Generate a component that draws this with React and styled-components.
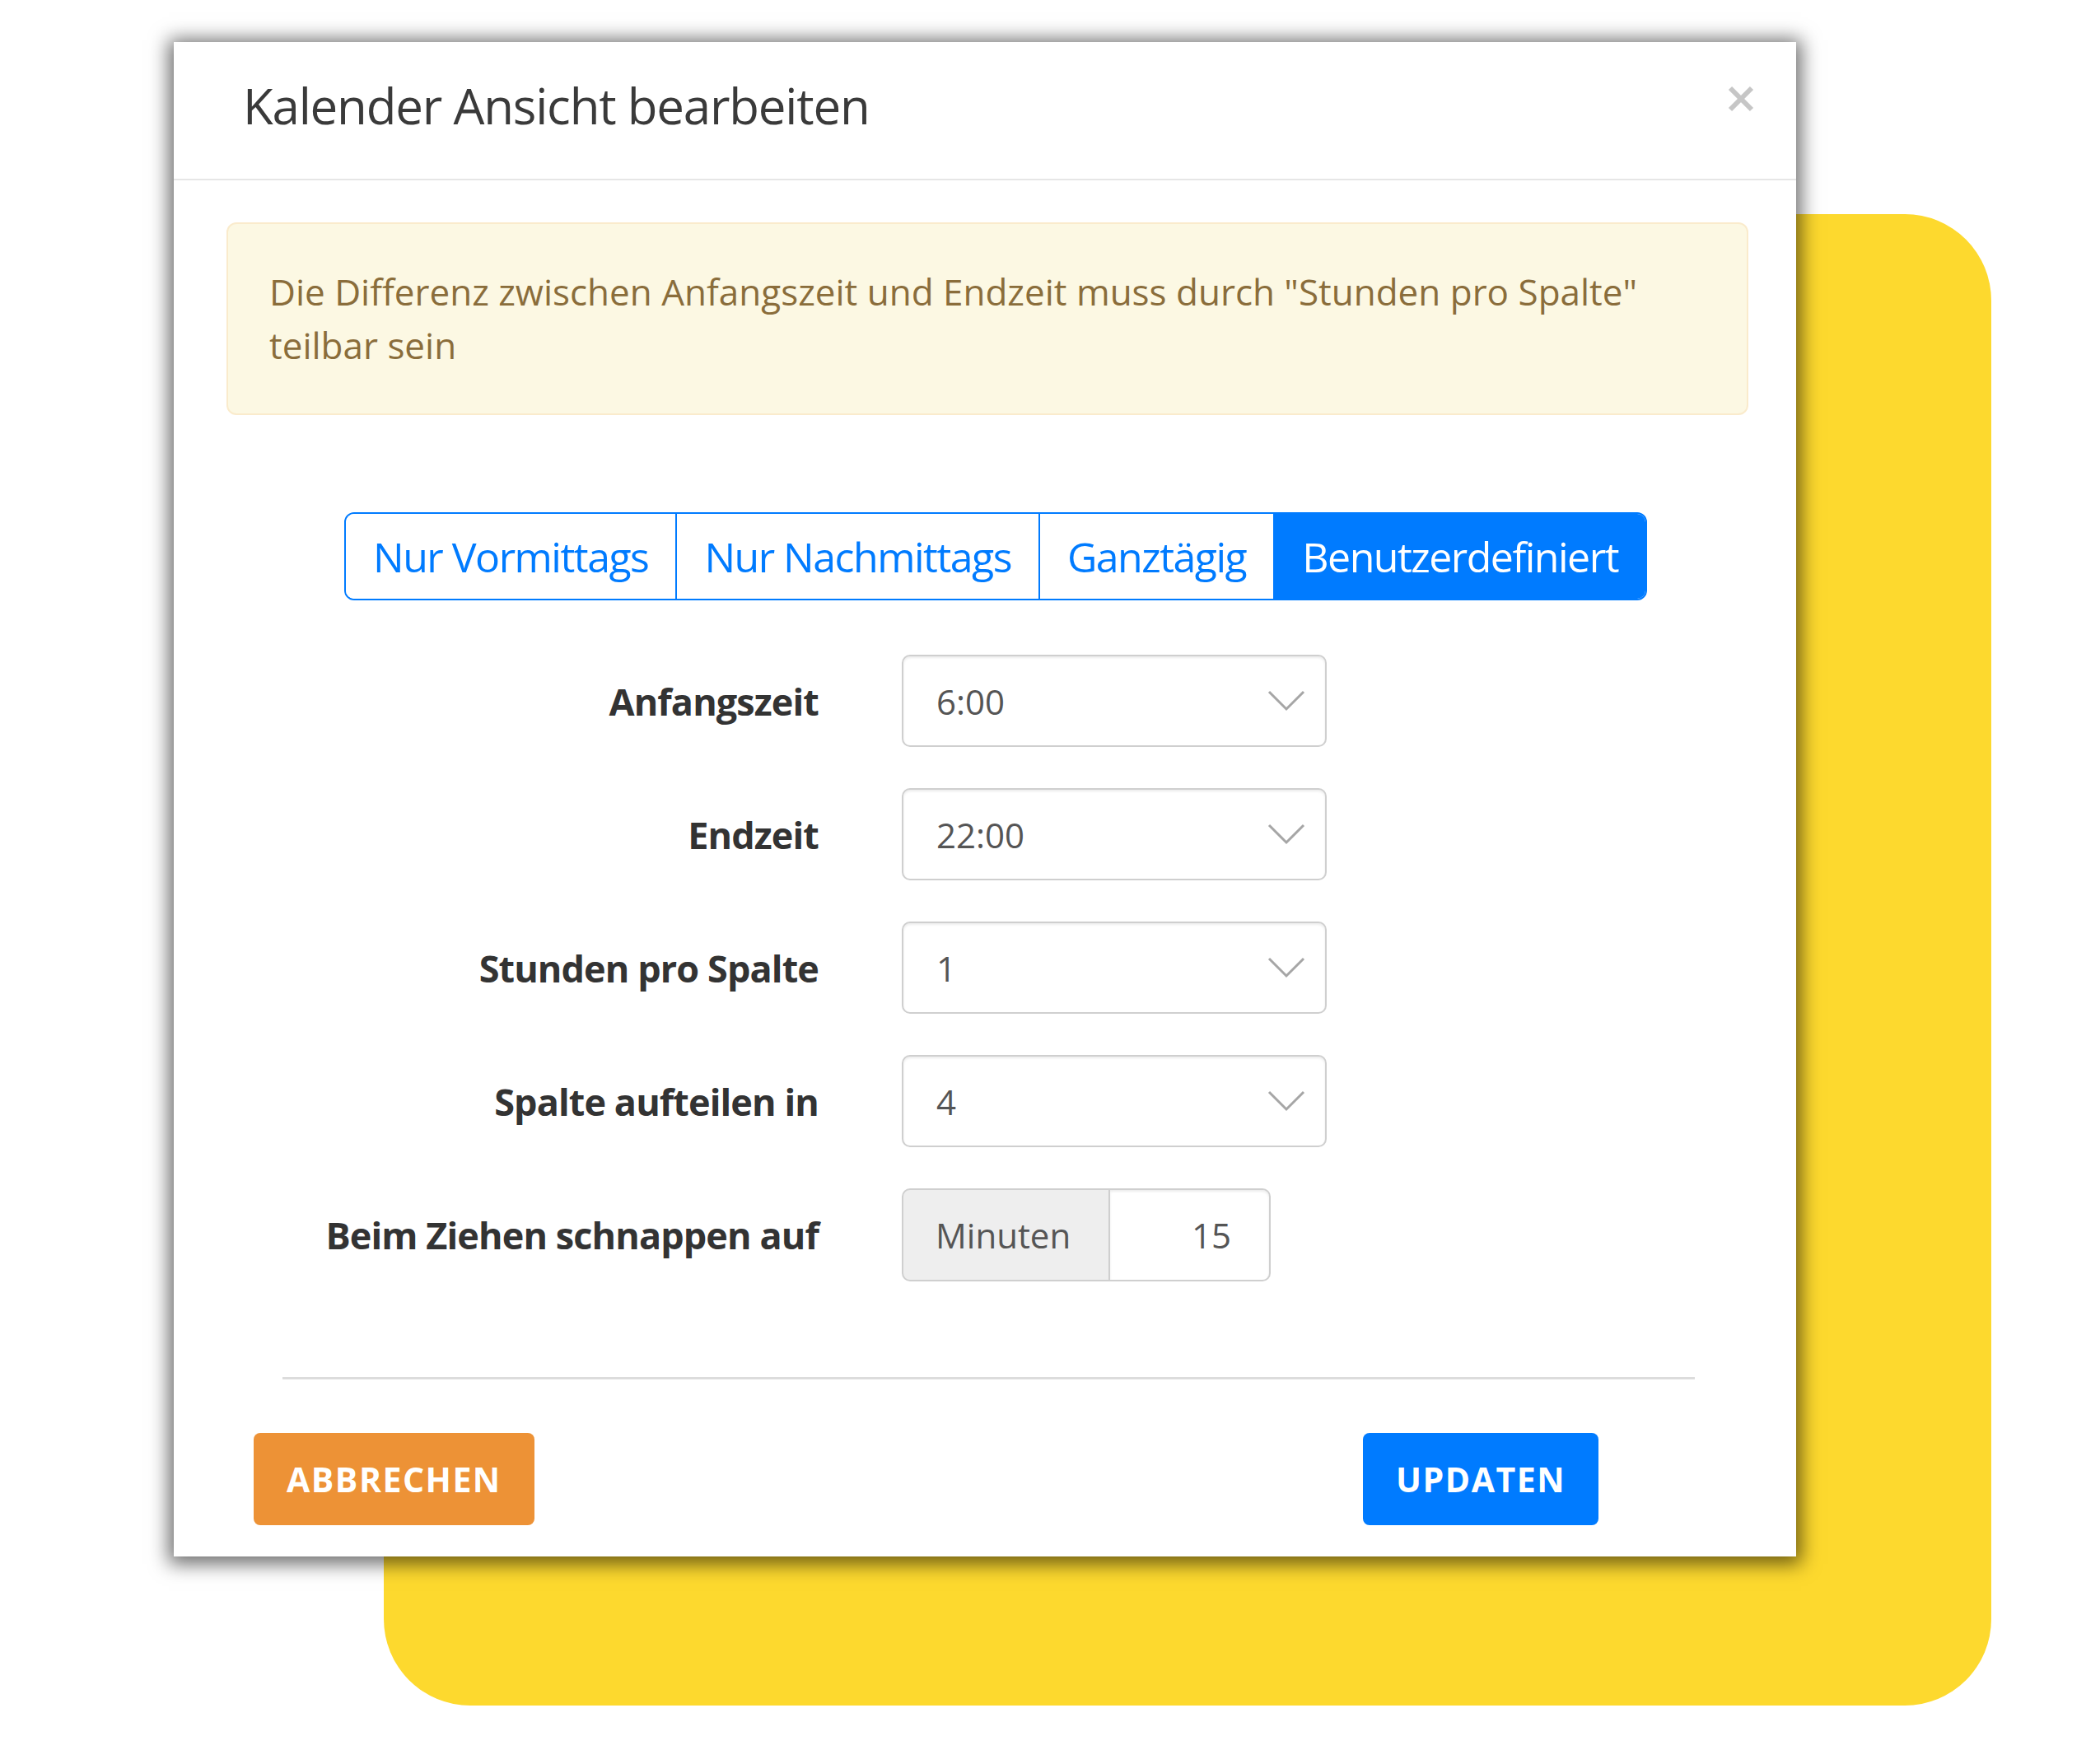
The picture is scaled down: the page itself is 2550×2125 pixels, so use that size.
import React from "react";
import styled, { createGlobalStyle } from "styled-components";

const GlobalStyle = createGlobalStyle`
  html, body {
    margin: 0;
    padding: 0;
    background: #fff;
  }
  body {
    font-family: "Open Sans", "Noto Sans", sans-serif;
    color: #333;
  }
  * {
    box-sizing: border-box;
  }
`;

const segments = ["Nur Vormittags", "Nur Nachmittags", "Ganztägig", "Benutzerdefiniert"];

const rows = [
  { label: "Anfangszeit", value: "6:00" },
  { label: "Endzeit", value: "22:00" },
  { label: "Stunden pro Spalte", value: "1" },
  { label: "Spalte aufteilen in", value: "4" },
];

function Chevron() {
  return (
    <svg width="46" height="26" viewBox="0 0 46 26" fill="none">
      <polyline points="2,2 23,23 44,2" stroke="#a6a6a6" strokeWidth="3" />
    </svg>
  );
}

function CloseIcon() {
  return (
    <svg width="32" height="32" viewBox="0 0 32 32">
      <line x1="3" y1="3" x2="29" y2="29" stroke="#c6c6c6" strokeWidth="6" />
      <line x1="29" y1="3" x2="3" y2="29" stroke="#c6c6c6" strokeWidth="6" />
    </svg>
  );
}

export default function App() {
  return (
    <>
      <GlobalStyle />
      <Stage>
        {/* yellow decoration behind the dialog */}
        <Backdrop />
        <Modal>
          <Header>
            <Title>Kalender Ansicht bearbeiten</Title>
            <CloseButton aria-label="Schließen">
              <CloseIcon />
            </CloseButton>
          </Header>
          <Body>
            <Alert>
              Die Differenz zwischen Anfangszeit und Endzeit muss durch "Stunden pro Spalte"
              teilbar sein
            </Alert>
            <SegmentRow>
              <SegGroup>
                {segments.map((s) => (
                  <Segment key={s} $active={s === "Benutzerdefiniert"}>
                    {s}
                  </Segment>
                ))}
              </SegGroup>
            </SegmentRow>
            <Form>
              {rows.map((r) => (
                <React.Fragment key={r.label}>
                  <Label>{r.label}</Label>
                  <Select>
                    <span>{r.value}</span>
                    <Chevron />
                  </Select>
                </React.Fragment>
              ))}
              <Label>Beim Ziehen schnappen auf</Label>
              <InputGroup>
                <Addon>Minuten</Addon>
                <NumberField>15</NumberField>
              </InputGroup>
            </Form>
            <Divider />
          </Body>
          <Footer>
            <Button $color="#ed9236">Abbrechen</Button>
            <Button $color="#007bff">Updaten</Button>
          </Footer>
        </Modal>
      </Stage>
    </>
  );
}

const Stage = styled.div`
  position: relative;
  width: 2550px;
  height: 2125px;
  padding: 51px 0 0 211px;
  overflow: hidden;
`;

const Backdrop = styled.div`
  position: absolute;
  left: 466px;
  top: 260px;
  width: 1952px;
  height: 1811px;
  background: #fdd92e;
  border-radius: 105px;
`;

const Modal = styled.div`
  position: relative;
  z-index: 1;
  width: 1970px;
  background: #fff;
  box-shadow: 0 3px 22px 6px rgba(0, 0, 0, 0.58);
`;

const Header = styled.div`
  display: flex;
  justify-content: space-between;
  align-items: flex-start;
  height: 168px;
  padding: 0 51px 0 84px;
  border-bottom: 2px solid #e6e6e6;
`;

const Title = styled.h4`
  margin: 44px 0 0;
  font-size: 60px;
  line-height: 66px;
  font-weight: 400;
  letter-spacing: -0.02em;
  color: #3a3a3a;
`;

const CloseButton = styled.button`
  display: flex;
  margin-top: 53px;
  padding: 0;
  border: 0;
  background: none;
`;

const Body = styled.div`
  padding: 51px 58px 0 64px;
`;

const Alert = styled.div`
  padding: 50px 50px;
  border: 2px solid #faebcc;
  border-radius: 12px;
  background: #fcf8e3;
  color: #8a6d3b;
  font-size: 44px;
  line-height: 65px;
`;

const SegmentRow = styled.div`
  display: flex;
  justify-content: center;
  margin-top: 118px;
  padding-left: 20px;
`;

const SegGroup = styled.div`
  display: inline-flex;
  border: 2px solid #007bff;
  border-radius: 12px;
  overflow: hidden;
`;

const Segment = styled.div`
  display: flex;
  align-items: center;
  height: 103px;
  padding: 0 33px;
  font-size: 50px;
  letter-spacing: -0.03em;
  color: ${(p) => (p.$active ? "#fff" : "#007bff")};
  background: ${(p) => (p.$active ? "#007bff" : "#fff")};
  & + & {
    border-left: 2px solid #007bff;
  }
`;

const Form = styled.div`
  display: grid;
  grid-template-columns: 719px 516px;
  column-gap: 101px;
  row-gap: 50px;
  margin-top: 66px;
`;

const Label = styled.div`
  align-self: center;
  text-align: right;
  font-size: 45px;
  font-weight: 700;
  letter-spacing: -0.02em;
  color: #333;
`;

const Select = styled.div`
  display: flex;
  align-items: center;
  justify-content: space-between;
  height: 112px;
  padding: 0 24px 0 40px;
  border: 2px solid #cfcfcf;
  border-radius: 10px;
  box-shadow: inset 0 2px 3px rgba(0, 0, 0, 0.08);
  font-size: 42px;
  color: #555;
`;

const InputGroup = styled.div`
  display: flex;
  width: 448px;
  height: 113px;
  font-size: 42px;
  color: #555;
`;

const Addon = styled.div`
  display: flex;
  align-items: center;
  width: 253px;
  padding-left: 39px;
  background: #eee;
  border: 2px solid #cfcfcf;
  border-radius: 10px 0 0 10px;
`;

const NumberField = styled.div`
  display: flex;
  align-items: center;
  justify-content: flex-end;
  flex: 1;
  padding-right: 46px;
  border: 2px solid #cfcfcf;
  border-left: 0;
  border-radius: 0 10px 10px 0;
  box-shadow: inset 0 2px 3px rgba(0, 0, 0, 0.08);
`;

const Divider = styled.div`
  height: 3px;
  margin: 116px 65px 0 68px;
  background: #dcdcdc;
`;

const Footer = styled.div`
  display: flex;
  justify-content: space-between;
  padding: 65px 240px 38px 97px;
`;

const Button = styled.button`
  height: 112px;
  padding: 0 40px;
  border: 0;
  border-radius: 8px;
  background: ${(p) => p.$color};
  color: #fff;
  font-family: "Open Sans", "Noto Sans", sans-serif;
  font-size: 41px;
  font-weight: 700;
  letter-spacing: 1.5px;
  text-transform: uppercase;
`;
